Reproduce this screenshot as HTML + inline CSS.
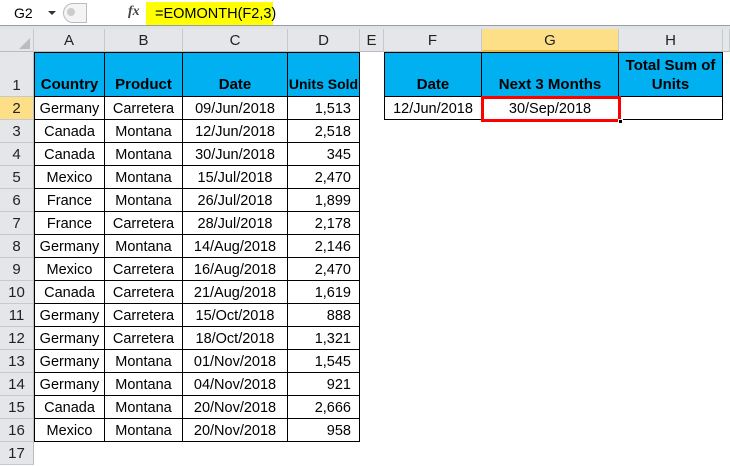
<!DOCTYPE html>
<html><head><style>
*{margin:0;padding:0;box-sizing:border-box}
body{width:730px;height:464px;overflow:hidden;background:#fff;font-family:"Liberation Sans",sans-serif;position:relative}
.a{position:absolute}
.ch{position:absolute;top:29px;height:23px;background:#e4e6ea;border-right:1px solid #c6c9ce;border-bottom:1px solid #b8bbc0;font-size:15px;color:#222;text-align:center;line-height:23px}
.rh{position:absolute;left:0;width:34px;background:#e4e6ea;border-bottom:1px solid #c6c9ce;border-right:1px solid #b8bbc0;font-size:15px;color:#222;text-align:center}
.c{position:absolute;font-size:14.5px;color:#000;border:1px solid #000;margin:-1px 0 0 -1px;white-space:nowrap;overflow:hidden;line-height:24px;text-align:center;height:24px}
.h{background:#00b0f0;font-weight:bold;font-size:15px;line-height:19px;display:flex;align-items:flex-end;justify-content:center;padding-bottom:2px;text-align:center}
.r{text-align:right;padding-right:8px}
</style></head><body>
<div class="a" style="left:0;top:0;width:730px;height:26px;background:#fff;border-bottom:1px solid #9a9da2"></div>
<div class="a" style="left:0;top:26px;width:730px;height:3px;background:#dfe2e6"></div>
<div class="a" style="left:14px;top:5px;font-size:14px">G2</div>
<div class="a" style="left:48px;top:11px;width:0;height:0;border-left:4px solid transparent;border-right:4px solid transparent;border-top:4px solid #333"></div>
<div class="a" style="left:63px;top:3px;width:24px;height:20px;border:1px solid #b8bbc0;border-radius:10px 0 0 10px;background:#f4f4f4"></div>
<div class="a" style="left:67px;top:8px;width:8px;height:8px;border-radius:50%;background:#ccc"></div>
<div class="a" style="left:128px;top:4px;font-size:14px;font-style:italic;font-family:'Liberation Serif',serif;font-weight:bold;color:#444">fx</div>
<div class="a" style="left:146px;top:2px;width:127px;height:23px;background:#ffff00;font-size:14.5px;line-height:24px;padding-left:9px">=EOMONTH(F2,3)</div>
<div class="ch" style="left:0;width:34px"></div>
<div class="a" style="left:19px;top:38px;width:0;height:0;border-left:11px solid transparent;border-bottom:11px solid #b9bcc0"></div>
<div class="ch" style="left:34px;width:71px">A</div>
<div class="ch" style="left:105px;width:78px">B</div>
<div class="ch" style="left:183px;width:105px">C</div>
<div class="ch" style="left:288px;width:72px">D</div>
<div class="ch" style="left:360px;width:24px">E</div>
<div class="ch" style="left:384px;width:98px">F</div>
<div class="ch" style="left:482px;width:137px;background:#fcdf87;border-bottom:2px solid #e8b94a">G</div>
<div class="ch" style="left:619px;width:104px">H</div>
<div class="ch" style="left:723px;width:7px"></div>
<div class="rh" style="top:52px;height:45px;line-height:68px">1</div>
<div class="rh" style="top:97px;height:23px;line-height:24px;background:#fcdf87">2</div>
<div class="c h" style="left:35px;top:53px;width:71px;height:45px">Country</div>
<div class="c h" style="left:105px;top:53px;width:79px;height:45px">Product</div>
<div class="c h" style="left:183px;top:53px;width:106px;height:45px">Date</div>
<div class="c h" style="left:288px;top:53px;width:73px;height:45px;font-size:14px">Units Sold</div>
<div class="c h" style="left:385px;top:53px;width:98px;height:45px">Date</div>
<div class="c h" style="left:482px;top:53px;width:138px;height:45px">Next 3 Months</div>
<div class="c h" style="left:619px;top:53px;width:105px;height:45px">Total Sum of<br>Units</div>
<div class="rh" style="top:120px;height:23px;line-height:24px">3</div>
<div class="rh" style="top:143px;height:23px;line-height:24px">4</div>
<div class="rh" style="top:166px;height:23px;line-height:24px">5</div>
<div class="rh" style="top:189px;height:23px;line-height:24px">6</div>
<div class="rh" style="top:212px;height:23px;line-height:24px">7</div>
<div class="rh" style="top:235px;height:23px;line-height:24px">8</div>
<div class="rh" style="top:258px;height:23px;line-height:24px">9</div>
<div class="rh" style="top:281px;height:23px;line-height:24px">10</div>
<div class="rh" style="top:304px;height:23px;line-height:24px">11</div>
<div class="rh" style="top:327px;height:23px;line-height:24px">12</div>
<div class="rh" style="top:350px;height:23px;line-height:24px">13</div>
<div class="rh" style="top:373px;height:23px;line-height:24px">14</div>
<div class="rh" style="top:396px;height:23px;line-height:24px">15</div>
<div class="rh" style="top:419px;height:23px;line-height:24px">16</div>
<div class="rh" style="top:442px;height:23px;line-height:24px">17</div>

<div class="c" style="left:35px;top:97px;width:71px">Germany</div><div class="c" style="left:105px;top:97px;width:79px">Carretera</div><div class="c" style="left:183px;top:97px;width:106px">09/Jun/2018</div><div class="c r" style="left:288px;top:97px;width:73px">1,513</div>
<div class="c" style="left:35px;top:120px;width:71px">Canada</div><div class="c" style="left:105px;top:120px;width:79px">Montana</div><div class="c" style="left:183px;top:120px;width:106px">12/Jun/2018</div><div class="c r" style="left:288px;top:120px;width:73px">2,518</div>
<div class="c" style="left:35px;top:143px;width:71px">Canada</div><div class="c" style="left:105px;top:143px;width:79px">Montana</div><div class="c" style="left:183px;top:143px;width:106px">30/Jun/2018</div><div class="c r" style="left:288px;top:143px;width:73px">345</div>
<div class="c" style="left:35px;top:166px;width:71px">Mexico</div><div class="c" style="left:105px;top:166px;width:79px">Montana</div><div class="c" style="left:183px;top:166px;width:106px">15/Jul/2018</div><div class="c r" style="left:288px;top:166px;width:73px">2,470</div>
<div class="c" style="left:35px;top:189px;width:71px">France</div><div class="c" style="left:105px;top:189px;width:79px">Montana</div><div class="c" style="left:183px;top:189px;width:106px">26/Jul/2018</div><div class="c r" style="left:288px;top:189px;width:73px">1,899</div>
<div class="c" style="left:35px;top:212px;width:71px">France</div><div class="c" style="left:105px;top:212px;width:79px">Carretera</div><div class="c" style="left:183px;top:212px;width:106px">28/Jul/2018</div><div class="c r" style="left:288px;top:212px;width:73px">2,178</div>
<div class="c" style="left:35px;top:235px;width:71px">Germany</div><div class="c" style="left:105px;top:235px;width:79px">Montana</div><div class="c" style="left:183px;top:235px;width:106px">14/Aug/2018</div><div class="c r" style="left:288px;top:235px;width:73px">2,146</div>
<div class="c" style="left:35px;top:258px;width:71px">Mexico</div><div class="c" style="left:105px;top:258px;width:79px">Carretera</div><div class="c" style="left:183px;top:258px;width:106px">16/Aug/2018</div><div class="c r" style="left:288px;top:258px;width:73px">2,470</div>
<div class="c" style="left:35px;top:281px;width:71px">Canada</div><div class="c" style="left:105px;top:281px;width:79px">Carretera</div><div class="c" style="left:183px;top:281px;width:106px">21/Aug/2018</div><div class="c r" style="left:288px;top:281px;width:73px">1,619</div>
<div class="c" style="left:35px;top:304px;width:71px">Germany</div><div class="c" style="left:105px;top:304px;width:79px">Carretera</div><div class="c" style="left:183px;top:304px;width:106px">15/Oct/2018</div><div class="c r" style="left:288px;top:304px;width:73px">888</div>
<div class="c" style="left:35px;top:327px;width:71px">Germany</div><div class="c" style="left:105px;top:327px;width:79px">Carretera</div><div class="c" style="left:183px;top:327px;width:106px">18/Oct/2018</div><div class="c r" style="left:288px;top:327px;width:73px">1,321</div>
<div class="c" style="left:35px;top:350px;width:71px">Germany</div><div class="c" style="left:105px;top:350px;width:79px">Montana</div><div class="c" style="left:183px;top:350px;width:106px">01/Nov/2018</div><div class="c r" style="left:288px;top:350px;width:73px">1,545</div>
<div class="c" style="left:35px;top:373px;width:71px">Germany</div><div class="c" style="left:105px;top:373px;width:79px">Montana</div><div class="c" style="left:183px;top:373px;width:106px">04/Nov/2018</div><div class="c r" style="left:288px;top:373px;width:73px">921</div>
<div class="c" style="left:35px;top:396px;width:71px">Canada</div><div class="c" style="left:105px;top:396px;width:79px">Montana</div><div class="c" style="left:183px;top:396px;width:106px">20/Nov/2018</div><div class="c r" style="left:288px;top:396px;width:73px">2,666</div>
<div class="c" style="left:35px;top:419px;width:71px">Mexico</div><div class="c" style="left:105px;top:419px;width:79px">Montana</div><div class="c" style="left:183px;top:419px;width:106px">20/Nov/2018</div><div class="c r" style="left:288px;top:419px;width:73px">958</div>

<div class="c" style="left:385px;top:97px;width:98px">12/Jun/2018</div>
<div class="c" style="left:482px;top:97px;width:138px">30/Sep/2018</div>
<div class="c" style="left:619px;top:97px;width:105px"></div>
<div class="a" style="left:481px;top:96px;width:140px;height:26px;border:3px solid #ff0000"></div>
<div class="a" style="left:618px;top:119px;width:5px;height:5px;background:#000;border:1px solid #fff"></div>
</body></html>
